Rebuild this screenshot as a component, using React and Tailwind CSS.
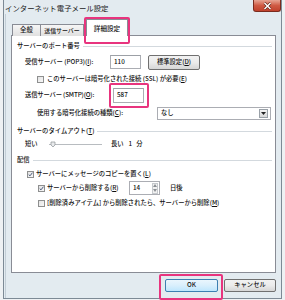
import React from "react";

const Check = ({ checked }) => (
  <span className="flex items-center justify-center w-[7px] h-[7px] border border-[#8e8f8f] bg-gradient-to-br from-[#e4e4e4] to-[#f7f7f7] shrink-0">
    {checked && (
      <svg width="7" height="7" viewBox="0 0 7 7">
        <path d="M1 3.6 L2.8 5.4 L6.2 1" fill="none" stroke="#3c4f74" strokeWidth="1.3" />
      </svg>
    )}
  </span>
);

const Field = ({ value, className }) => (
  <div className={`h-[14px] border border-[#abadb3] border-t-[#9ca0a6] bg-white flex items-center pl-[3px] ${className}`}>
    {value}
  </div>
);

const Header = ({ children }) => (
  <div className="flex items-center h-[12px]">
    <span>{children}</span>
    <div className="flex-1 h-px bg-[#d3d9de] ml-[3px]" />
  </div>
);

const Btn = ({ children, className }) => (
  <div
    className={`flex items-center justify-center rounded-[2px] border border-[#707070] bg-gradient-to-b from-[#f2f2f2] via-[#ebebeb] to-[#d6d6d6] ${className}`}
  >
    {children}
  </div>
);

export default function App() {
  return (
    <div className="w-[285px] h-[300px] bg-[#eef1f3] overflow-hidden whitespace-nowrap font-['Noto_Sans_CJK_JP','Liberation_Sans',sans-serif] font-medium text-[6.3px] leading-none text-[#111]">
      <div className="ml-[3px] w-[279px] h-[299px] border-x border-b border-[#7d8a95] bg-[#e3ebf0] flex flex-col">
        {/* title bar */}
        <div className="h-[14px] flex items-start justify-between">
          <span className="ml-[1px] mt-[4px] text-[7.4px] font-normal text-[#222]">インターネット電子メール設定</span>
          <div className="w-[28px] h-[12px] rounded-b-[3px] border border-t-0 border-[#7a2b1e] bg-gradient-to-b from-[#e6a494] via-[#cf5a44] to-[#c0412c] flex items-center justify-center">
            <svg width="9" height="8" viewBox="0 0 9 8">
              <path d="M1.5 1 L7.5 7 M7.5 1 L1.5 7" stroke="#5a1d12" strokeWidth="2.6" />
              <path d="M1.5 1 L7.5 7 M7.5 1 L1.5 7" stroke="#ffffff" strokeWidth="1.5" />
            </svg>
          </div>
        </div>

        {/* client */}
        <div className="flex-1 flex flex-col pl-[5px] border-l border-[#c3ced6] ml-px">
          {/* tabs */}
          <div className="h-[22px] flex items-end -mb-px ml-px relative z-10">
            <div className="w-[29px] h-[12px] border border-b-0 border-[#898c95] bg-gradient-to-b from-[#f6f6f6] to-[#e0e0e0] flex items-center justify-center text-[6.4px]">
              全般
            </div>
            <div className="w-[43px] h-[12px] border border-b-0 border-l-0 border-[#898c95] bg-gradient-to-b from-[#f6f6f6] to-[#e0e0e0] flex items-center justify-center text-[5.9px]">
              送信サーバー
            </div>
            <div className="relative ml-[2px] w-[42px] h-[17px] border border-b-0 border-[#898c95] bg-white flex items-center justify-center text-[6.6px]">
              詳細設定
              <div className="absolute -left-[3px] -top-[3px] -right-[3px] -bottom-[8px] border-2 border-[#e8347e] rounded-[2px]" />
            </div>
          </div>

          {/* panel */}
          <div className="w-[265px] h-[238px] border border-[#898c95] bg-white flex flex-col pl-[5px] pr-[3px] pt-[4px]">
            <Header>サーバーのポート番号</Header>

            <div className="flex items-center h-[12px] mt-[4px]">
              <span className="ml-[8px] w-[85px]">
                受信サーバー (POP3)(<u>I</u>):
              </span>
              <Field value="110" className="w-[31px]" />
              <Btn className="ml-[7px] w-[52px] h-[15px]">
                標準設定(<u>D</u>)
              </Btn>
            </div>

            <div className="flex items-center h-[12px] mt-[5px]">
              <span className="ml-[20px]">
                <Check />
              </span>
              <span className="ml-[3px]">
                このサーバーは暗号化された接続 (SSL) が必要(<u>E</u>)
              </span>
            </div>

            <div className="flex items-center h-[12px] mt-[4px]">
              <span className="ml-[8px] w-[88px] tracking-[-0.15px]">
                送信サーバー (SMTP)(<u>O</u>):
              </span>
              <div className="relative">
                <Field value="587" className="w-[31px] h-[15px]" />
                <div className="absolute -left-[4px] -top-[5px] -right-[5px] -bottom-[5px] border-2 border-[#e8347e] rounded-[2px]" />
              </div>
            </div>

            <div className="flex items-center h-[12px] mt-[6px]">
              <span className="ml-[20px] w-[120px]">
                使用する暗号化接続の種類(<u>C</u>):
              </span>
              <div className="w-[114px] h-[13px] border border-[#abadb3] bg-white flex items-center justify-between pl-[3px] pr-[2px]">
                <span>なし</span>
                <div className="w-[9px] h-[9px] border border-[#9aa1a8] bg-gradient-to-b from-[#f4f4f4] to-[#d9d9d9] flex items-center justify-center">
                  <svg width="5" height="3" viewBox="0 0 5 3">
                    <path d="M0 0 H5 L2.5 3 Z" fill="#222" />
                  </svg>
                </div>
              </div>
            </div>

            <div className="mt-[6px]">
              <Header>
                サーバーのタイムアウト(<u>T</u>)
              </Header>
            </div>

            <div className="flex items-center h-[12px] mt-px">
              <span className="ml-[8px] w-[24px]">短い</span>
              <svg width="53" height="7" viewBox="0 0 53 7">
                <rect x="0" y="3" width="53" height="1" fill="#b8bcc0" />
                <path d="M2 1 H6 V4 L4 6 L2 4 Z" fill="#e8eaec" stroke="#8d9297" strokeWidth="0.7" />
              </svg>
              <span className="ml-[9px]">長い</span>
              <span className="ml-[5px]">1</span>
              <span className="ml-[4px]">分</span>
            </div>

            <div className="mt-[4px]">
              <Header>配信</Header>
            </div>

            <div className="flex items-center h-[12px] mt-[2px]">
              <span className="ml-[10px]">
                <Check checked />
              </span>
              <span className="ml-[2px]">
                サーバーにメッセージのコピーを置く(<u>L</u>)
              </span>
            </div>

            <div className="flex items-center h-[12px] mt-[2px]">
              <span className="ml-[21px]">
                <Check checked />
              </span>
              <span className="ml-[2px] w-[82px]">
                サーバーから削除する(<u>R</u>)
              </span>
              <div className="w-[31px] h-[14px] border border-[#abadb3] bg-white flex items-center justify-between pl-[3px] pr-px">
                <span>14</span>
                <div className="w-[6px] h-[11px] border border-[#c5c9cd] bg-[#f1f1f1] flex flex-col items-center justify-around">
                  <svg width="4" height="3" viewBox="0 0 4 3">
                    <path d="M0 3 H4 L2 0 Z" fill="#8a8f94" />
                  </svg>
                  <svg width="4" height="3" viewBox="0 0 4 3">
                    <path d="M0 0 H4 L2 3 Z" fill="#8a8f94" />
                  </svg>
                </div>
              </div>
              <span className="ml-[10px]">日後</span>
            </div>

            <div className="flex items-center h-[12px] mt-[3px]">
              <span className="ml-[21px]">
                <Check />
              </span>
              <span className="ml-[2px]">
                [削除済みアイテム] から削除されたら、サーバーから削除(<u>M</u>)
              </span>
            </div>
          </div>

          {/* buttons */}
          <div className="flex justify-end gap-[6px] pr-[5px] mt-[6px]">
            <div className="relative">
              <div className="w-[53px] h-[13px] flex items-center justify-center rounded-[2px] border border-[#3c7fb1] bg-gradient-to-b from-[#eaf6fd] via-[#d9effc] to-[#bee6fd]">
                OK
              </div>
              <div className="absolute -left-[6px] -top-[5px] -right-[5px] -bottom-[8px] border-2 border-[#e8347e] rounded-[2px]" />
            </div>
            <Btn className="w-[52px] h-[13px]">キャンセル</Btn>
          </div>
        </div>
      </div>
    </div>
  );
}
